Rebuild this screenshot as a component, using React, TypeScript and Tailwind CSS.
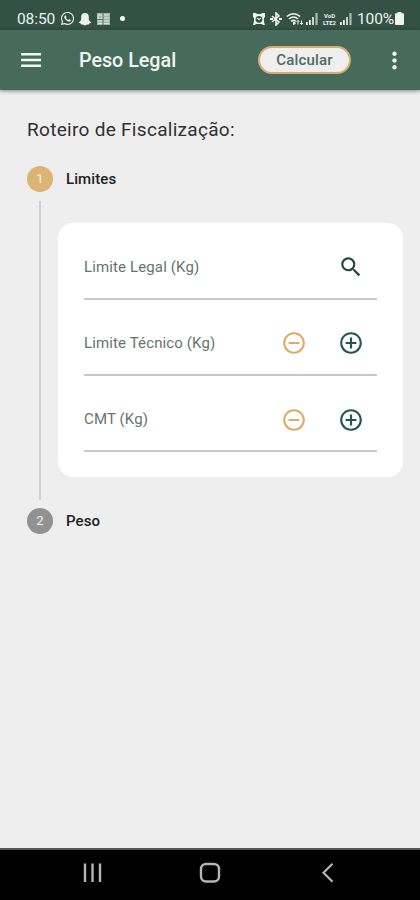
import React from "react";
import { FaWhatsapp } from "react-icons/fa";
import {
  MdAddCircleOutline,
  MdMoreVert,
  MdRemoveCircleOutline,
  MdSearch,
} from "react-icons/md";

interface LimitField {
  label: string;
  searchable?: boolean;
}

const fields: LimitField[] = [
  { label: "Limite Legal (Kg)", searchable: true },
  { label: "Limite Técnico (Kg)" },
  { label: "CMT (Kg)" },
];

const SignalIcon = ({ className }: { className: string }) => (
  <svg viewBox="0 0 12 12" className={`h-3 w-3 shrink-0 ${className}`} fill="currentColor">
    <rect x="0" y="9" width="1.8" height="3" />
    <rect x="3" y="7" width="1.8" height="5" />
    <rect x="6" y="4" width="2" height="8" opacity=".8" />
    <rect x="9.4" y="0" width="2.2" height="12" opacity=".65" />
  </svg>
);

const StatusBar = () => (
  <div className="flex h-[30px] shrink-0 items-center bg-[#345145] pt-[7px] pl-[17px] text-[#eef3f0]">
    <span className="w-[43px] shrink-0 text-[15.5px] leading-[22px] tracking-[-0.1px]">08:50</span>
    <FaWhatsapp className="h-[15px] w-[15px] shrink-0" />
    <svg viewBox="0 0 14 14" className="ml-[3px] h-[14px] w-[14px] shrink-0" fill="currentColor">
      <path d="M7 1C4.500 1 3.200 2.700 3.200 4.800v2.400C3 8.500 2 9.500.7 10.200c.1.900 1.200 1 2 1.300l.4 1h1.600L7 13.600l2.300-1.100h1.600l.4-1c.8-.3 1.900-.4 2-1.300-1.300-.7-2.300-1.700-2.500-3V4.800C10.800 2.700 9.500 1 7 1z" />
    </svg>
    <svg viewBox="0 0 14 12" className="ml-[5px] h-3 w-[14px] shrink-0">
      <path d="M0 0h13v12H0z" fill="#a4b4ab" />
      <path d="M1 2h4v4H1zM7 2h5M7 5h5M1 8h4M7 8h5M1 10.5h11" fill="none" stroke="#dce4df" />
      <path d="M6 0v12M0 6.5h6" fill="none" stroke="#5d766a" />
    </svg>
    <span className="ml-[9px] h-[5px] w-[5px] shrink-0 rounded-full bg-white" />

    <svg viewBox="0 0 14 14" className="ml-[127px] h-[14px] w-[14px] shrink-0">
      <path d="M1 1h3l1 1h4l1-1h3v4l-1 1v4l1 3h-2l-1-1H4l-1 1H1l1-4V6L1 5z" fill="currentColor" />
      <circle cx="7" cy="7.3" r="3.4" fill="#345145" />
      <path d="M5 6l2 1.6L9 6" fill="none" stroke="currentColor" strokeWidth="1.1" />
    </svg>
    <svg viewBox="0 0 12 14" className="ml-[4px] h-[14px] w-3 shrink-0" fill="none" stroke="currentColor">
      <path d="M2 4l7 6-3 3V1l3 3-7 6" strokeWidth="1.6" />
      <path d="M0 7h3M9 7h3" strokeWidth="2.2" />
    </svg>
    <svg viewBox="0 0 18 14" className="ml-[4px] h-[14px] w-[18px] shrink-0" fill="none" stroke="currentColor">
      <path d="M.8 4.5Q7.5-1 14.2 4.5M3 7Q7.5 3 12 7M5.2 9.3Q7.5 7.3 9.8 9.3" strokeWidth="1.6" />
      <path d="M7.5 10l2 1-2 2z" fill="currentColor" />
      <path d="M12 8.5v4M15.5 8.5v4M10.5 10l1.5-1.5 1.5 1.5M14 11l1.5 1.5L17 11" strokeWidth="1" />
    </svg>
    <SignalIcon className="ml-[2px]" />
    <span className="ml-[3px] flex w-[17px] shrink-0 flex-col items-center text-[6px] font-bold">
      <span className="leading-[7px]">VoD</span>
      <span className="leading-[7px]">LTE2</span>
    </span>
    <SignalIcon className="ml-[2px]" />
    <span className="ml-[5px] w-[38px] shrink-0 text-[15.5px] leading-[22px] tracking-[-0.1px]">100%</span>
    <svg viewBox="0 0 9 13" className="h-[13px] w-[9px] shrink-0" fill="currentColor">
      <path d="M2.5 0h4v1.3H8a1 1 0 0 1 1 1V12a1 1 0 0 1-1 1H1a1 1 0 0 1-1-1V2.3a1 1 0 0 1 1-1h1.5z" />
    </svg>
  </div>
);

const AppHeader = () => (
  <header className="relative flex h-[60px] shrink-0 items-center bg-[#466b5b] pl-[21px] text-[#f1f5f3] shadow-[0_1px_4px_rgba(0,0,0,0.45)]">
    <button aria-label="Menu">
      <svg viewBox="0 0 20 14" className="h-[14px] w-5" fill="currentColor">
        <path d="M0 0h20v2.6H0zM0 5.7h20v2.6H0zM0 11.4h20V14H0z" />
      </svg>
    </button>
    <h1 className="ml-[38px] w-[179px] pt-[2px] text-[19.7px] font-medium">Peso Legal</h1>
    <button className="h-[28px] w-[93px] rounded-full border-2 border-[#d8ac70] bg-[#efefef] text-[15px] leading-[24px] font-medium tracking-[0.15px] text-[#4d6c60]">
      Calcular
    </button>
    <button aria-label="Mais opções" className="ml-[30px]">
      <MdMoreVert className="h-[27px] w-[27px]" />
    </button>
  </header>
);

const StepHeader = ({ step, title, active = false }: { step: number; title: string; active?: boolean }) => (
  <div className="flex h-[26px] items-center">
    <span
      className={`flex h-[26px] w-[26px] items-center justify-center rounded-full text-[13px] text-[#f3f3f3] ${
        active ? "bg-[#dcb475]" : "bg-[#929292]"
      }`}
    >
      {step}
    </span>
    <h3 className="ml-[13px] pt-px text-[15px] font-medium tracking-[0.1px] text-[#222222]">{title}</h3>
  </div>
);

const FieldRow = ({ label, searchable = false }: LimitField) => (
  <div className="flex h-[76.3px] items-center border-b-2 border-[#c9c9c9] pt-[13px] pr-[13px]">
    <span className="flex-1 text-[15px] tracking-[0.13px] text-[#65746d]">{label}</span>
    {searchable ? (
      <MdSearch className="h-[26px] w-[26px] text-[#24483b]" />
    ) : (
      <div className="flex gap-[31px]">
        <MdRemoveCircleOutline className="h-[26px] w-[26px] text-[#dfab64]" />
        <MdAddCircleOutline className="h-[26px] w-[26px] text-[#24574a]" />
      </div>
    )}
  </div>
);

const NavigationBar = () => (
  <nav className="flex h-[52px] shrink-0 items-center justify-between border-t-2 border-[#555555] bg-black px-[82px] pb-[4px] text-[#b5b5b5]">
    <svg viewBox="0 0 22 22" className="h-[22px] w-[22px]" fill="none" stroke="currentColor" strokeWidth="2.4">
      <path d="M3 1.5v18.5M10.5 1.5v18.5M18 1.5v18.5" />
    </svg>
    <svg viewBox="0 0 22 22" className="h-[22px] w-[22px]" fill="none" stroke="currentColor" strokeWidth="2.4">
      <rect x="2" y="2" width="18" height="17.5" rx="5" />
    </svg>
    <svg viewBox="0 0 22 22" className="h-[22px] w-[22px]" fill="none" stroke="currentColor" strokeWidth="2.2">
      <path d="M16.5 1.8l-9 9 9 9" />
    </svg>
  </nav>
);

export default function App() {
  return (
    <div className="flex h-[900px] w-[420px] flex-col overflow-hidden bg-[#eeeeee] font-['Roboto',sans-serif]">
      <StatusBar />
      <AppHeader />
      <main className="flex-1 pt-[27px] pl-[27px]">
        <h2 className="h-[24px] text-[19px] leading-[25px] tracking-[0.3px] text-[#303030]">
          Roteiro de Fiscalização:
        </h2>
        <div className="mt-[25px]">
          <StepHeader step={1} title="Limites" active />
          <div className="mt-[9px] flex h-[299px] pl-[12px]">
            <div className="w-[2px] bg-[#d0d0d0]" />
            <section className="mt-[22px] ml-[17px] h-[254px] w-[345px] rounded-[15px] bg-white px-[26px] pt-[0.5px]">
              {fields.map((field) => (
                <FieldRow key={field.label} {...field} />
              ))}
            </section>
          </div>
          <div className="mt-[8px]">
            <StepHeader step={2} title="Peso" />
          </div>
        </div>
      </main>
      <NavigationBar />
    </div>
  );
}
